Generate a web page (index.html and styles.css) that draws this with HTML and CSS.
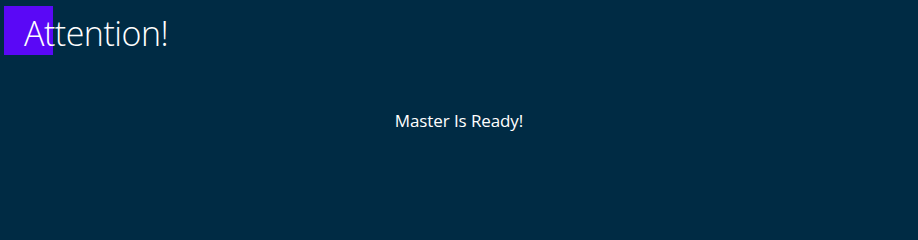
FILE: index.html
```html
<!DOCTYPE html>
<html>
<head>
<meta charset="utf-8">
<link rel="stylesheet" href="styles.css">
</head>
<body>
<div class="page">
  <header class="header">
    <span class="badge"></span>
    <h1 class="title">Attention!</h1>
  </header>
  <main class="content">
    <p class="message">Master Is Ready!</p>
  </main>
</div>
</body>
</html>
```

FILE: styles.css
```css
html, body {
  margin: 0;
  padding: 0;
  background: #002b44;
  height: 100%;
}
.page {
  width: 918px;
  height: 211px;
  display: flex;
  flex-direction: column;
  font-family: "Open Sans", "Liberation Sans", sans-serif;
  color: #ffffff;
}
.header {
  position: relative;
  height: 62px;
  padding-left: 24px;
}
.badge {
  position: absolute;
  left: 4px;
  top: 6px;
  width: 49px;
  height: 49px;
  background: #5a08f6;
}
.title {
  position: relative;
  margin: 0;
  padding-top: 11px;
  font-weight: 300;
  font-size: 34px;
  line-height: 44px;
  letter-spacing: -0.5px;
  height: 44px;
}
.content {
  display: flex;
  justify-content: center;
  padding-top: 48px;
}
.message {
  margin: 0;
  font-size: 17px;
  line-height: 22px;
  letter-spacing: -0.1px;
}
```
